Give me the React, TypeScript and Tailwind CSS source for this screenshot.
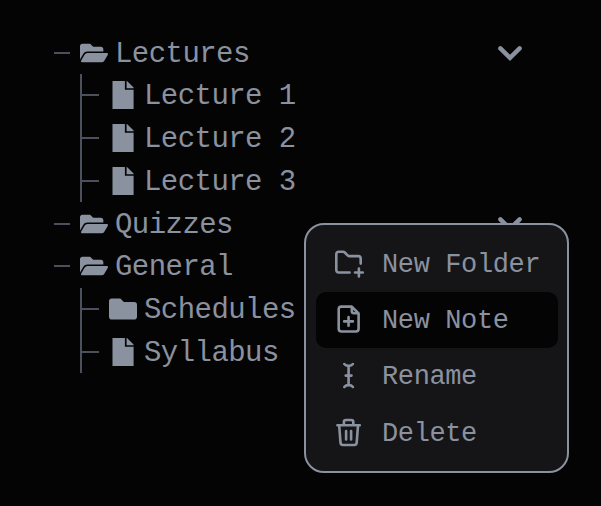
import React from "react";
import { FaFolder, FaFolderOpen } from "react-icons/fa";

function FileIcon({ className, size }: { className?: string; size: number }) {
  return (
    <svg className={className} width={size} height={size} viewBox="0 0 28 28" fill="currentColor">
      <path d="M3.5 0H15.9V8.8H24.6V28H3.5ZM17.6 0H18L24.6 6.6V7.2H17.6Z" />
    </svg>
  );
}

const entryIcons = { open: FaFolderOpen, folder: FaFolder, file: FileIcon };

type EntryProps = { name: string; kind: keyof typeof entryIcons; chevron?: boolean };

function Chevron() {
  return (
    <svg className="mr-[-1px] ml-auto" width="26" height="20" viewBox="0 0 26 20" fill="none" stroke="currentColor" strokeWidth="4.4" strokeLinecap="round">
      <path d="M3.4 5.4L13 14.8L22.6 5.4" />
    </svg>
  );
}

function Root({ name, kind, chevron }: EntryProps) {
  const Icon = entryIcons[kind];
  return (
    <div className="flex h-[42.75px] items-center">
      <span className="h-[2px] w-4 bg-[#4b505c]" />
      <Icon className="ml-[10px] shrink-0" size={28} />
      <span className="ml-[7px] pt-[3px]">{name}</span>
      {chevron && <Chevron />}
    </div>
  );
}

function Child({ name, kind }: EntryProps) {
  const Icon = entryIcons[kind];
  return (
    <div className="flex h-[42.75px] items-center">
      <span className="h-[2px] w-[17px] bg-[#4b505c]" />
      <Icon className="ml-[10px] shrink-0" size={28} />
      <span className="ml-[7px] pt-[3px]">{name}</span>
    </div>
  );
}

function Branch({ children }: { children: React.ReactNode }) {
  return <div className="ml-[26px] border-l-2 border-[#4b505c]">{children}</div>;
}

function MenuItem({ label, active, children }: { label: string; active?: boolean; children: React.ReactNode }) {
  return (
    <div className={`flex flex-1 items-center rounded-[10px] pl-[17px] ${active ? "bg-[#040404]" : ""}`}>
      <svg className="shrink-0" width="32" height="32" viewBox="0 0 32 32" fill="none" stroke="currentColor" strokeWidth="2.6" strokeLinecap="round" strokeLinejoin="round">
        {children}
      </svg>
      <span className="ml-[17px] pt-[3px]">{label}</span>
    </div>
  );
}

export default function App() {
  return (
    <main className="relative h-[506px] w-[601px] overflow-hidden bg-[#040404] pt-[31.2px] pl-[54px] font-['Liberation_Mono',monospace] text-[29px] leading-none tracking-[-0.55px] whitespace-pre text-[#8a919f]">
      <div className="w-[468px]">
        <Root name="Lectures" kind="open" chevron />
        <Branch>
          <Child name="Lecture 1" kind="file" />
          <Child name="Lecture 2" kind="file" />
          <Child name="Lecture 3" kind="file" />
        </Branch>
        <Root name="Quizzes" kind="open" chevron />
        <Root name="General" kind="open" />
        <Branch>
          <Child name="Schedules" kind="folder" />
          <Child name="Syllabus" kind="file" />
        </Branch>
      </div>

      <div className="absolute top-[223px] left-[304px] flex h-[250px] w-[265px] flex-col rounded-[20px] border-2 border-[#8a919f] bg-[#151517] pt-[10.7px] pr-[9px] pb-[10.1px] pl-[10px] text-[27px] tracking-[-0.38px]">
        <MenuItem label="New Folder">
          <path d="M16.6 24.5H5.8Q3.3 24.5 3.3 22V6.2Q3.3 3.7 5.8 3.7H10Q11 3.7 11.8 4.5L14.6 7.3Q15.4 8.1 16.5 8.1H25.2Q27.7 8.1 27.7 10.6V15.6M22 24.5H29.8M25.9 20.6V28.4" />
        </MenuItem>
        <MenuItem label="New Note" active>
          <path d="M18.5 2.6H8.4Q5.7 2.6 5.7 5.3V24.8Q5.7 27.5 8.4 27.5H22.9Q25.6 27.5 25.6 24.8V9.5L18.8 2.6V7Q18.8 9.3 21.1 9.3H25.2M11.2 17.4H19.9M15.55 13.1V21.7" />
        </MenuItem>
        <MenuItem label="Rename">
          <path d="M11.3 4Q12.7 5.9 15.6 5.9Q18.5 5.9 19.9 4M15.6 5.9V25.1M11.3 27Q12.7 25.1 15.6 25.1Q18.5 25.1 19.9 27M12.7 15.6H18.5" />
        </MenuItem>
        <MenuItem label="Delete">
          <path d="M4.4 8.3H26.8M10.9 8.1V5Q10.9 3 12.9 3H18.3Q20.3 3 20.3 5V8.1M6.2 8.7L7.5 25.6Q7.7 28 10.1 28H21.1Q23.5 28 23.7 25.6L25 8.7M13.1 14V22.5M18.1 14V22.5" />
        </MenuItem>
      </div>
    </main>
  );
}
